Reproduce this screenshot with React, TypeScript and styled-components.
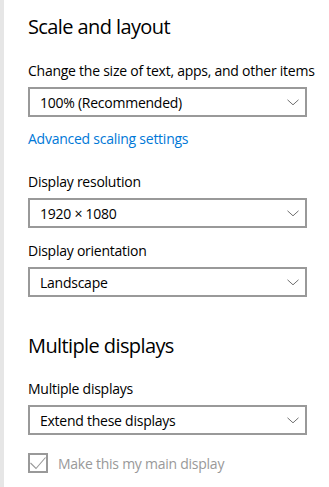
import * as React from 'react';
import styled, { createGlobalStyle } from 'styled-components';

const GlobalStyle = createGlobalStyle`
  html, body {
    margin: 0;
    padding: 0;
    background: #ffffff;
  }
  body {
    font-family: 'Open Sans', 'Noto Sans', sans-serif;
    color: #000000;
  }
`;

const Page = styled.div`
  display: flex;
  width: 329px;
  height: 487px;
  overflow: hidden;
`;

const SideStrip = styled.div`
  width: 4px;
  flex: none;
  background: #e6e6e6;
`;

const Content = styled.div`
  flex: 1;
  padding: 13px 20px 0 24px;
  display: flex;
  flex-direction: column;
`;

const Heading = styled.h2<{ $top?: number }>`
  margin: ${(p) => p.$top ?? 0}px 0 0;
  font-size: 20px;
  font-weight: 400;
  line-height: 28px;
  letter-spacing: -0.6px;
`;

const Label = styled.div<{ $top: number }>`
  margin-top: ${(p) => p.$top}px;
  font-size: 14px;
  line-height: 20px;
  letter-spacing: -0.25px;
  white-space: nowrap;
`;

const Select = styled.div`
  margin-top: 6px;
  height: 30px;
  width: 279px;
  box-sizing: border-box;
  border: 2px solid #999999;
  display: flex;
  align-items: center;
  justify-content: space-between;
  padding: 0 6px 0 10px;
  font-size: 14px;
  letter-spacing: -0.25px;
`;

const Link = styled.a`
  margin-top: 12px;
  font-size: 14px;
  line-height: 20px;
  letter-spacing: -0.25px;
  color: #0078d7;
  text-decoration: none;
  align-self: flex-start;
`;

const CheckRow = styled.label`
  margin-top: 18px;
  display: flex;
  align-items: center;
  gap: 10px;
  font-size: 14px;
  letter-spacing: -0.25px;
  color: #999999;
`;

const CheckBox = styled.span`
  width: 20px;
  height: 20px;
  box-sizing: border-box;
  border: 2px solid #999999;
  display: flex;
  align-items: center;
  justify-content: center;
`;

const Chevron = () => (
  <svg width="12" height="7" viewBox="0 0 12 7">
    <path d="M0.5 0.8 L6 5.8 L11.5 0.8" fill="none" stroke="#707070" strokeWidth="1" />
  </svg>
);

const Dropdown = ({ value }: { value: string }) => (
  <Select>
    <span>{value}</span>
    <Chevron />
  </Select>
);

export default function App() {
  return (
    <Page>
      <GlobalStyle />
      <SideStrip />
      <Content>
        <Heading>Scale and layout</Heading>
        <Label $top={20}>Change the size of text, apps, and other items</Label>
        <Dropdown value="100% (Recommended)" />
        <Link href="#">Advanced scaling settings</Link>
        <Label $top={23}>Display resolution</Label>
        <Dropdown value="1920 × 1080" />
        <Label $top={13}>Display orientation</Label>
        <Dropdown value="Landscape" />
        <Heading $top={35}>Multiple displays</Heading>
        <Label $top={19}>Multiple displays</Label>
        <Dropdown value="Extend these displays" />
        <CheckRow>
          <CheckBox>
            <svg width="16" height="16" viewBox="0 0 16 16">
              <path d="M0.5 8 L6 13.5 L15.5 2.5" fill="none" stroke="#999" strokeWidth="1.1" />
            </svg>
          </CheckBox>
          Make this my main display
        </CheckRow>
      </Content>
    </Page>
  );
}
